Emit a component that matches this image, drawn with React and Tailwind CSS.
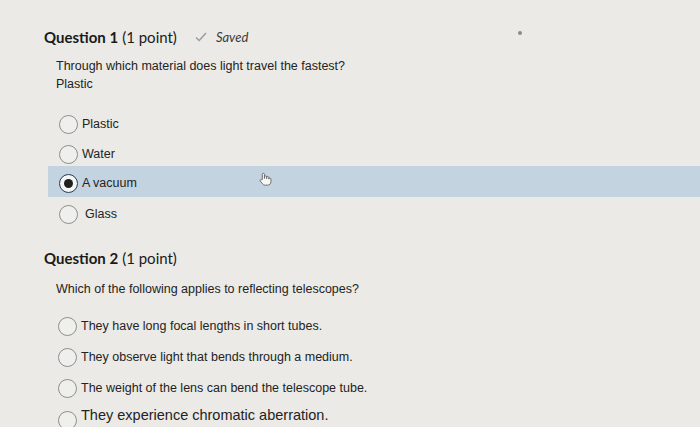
import React from 'react';

const Radio = ({ checked }) => (
    <span className={`flex items-center justify-center w-[19px] h-[19px] rounded-full border shrink-0 ${checked ? 'border-[#26395a] border-[1.5px] bg-[#f4f5f6]' : 'border-[#8d8d8d] bg-[#efefec]'}`}>
        {checked && <span className="w-[9px] h-[9px] rounded-full bg-[#1f1f1f]" />}
    </span>
);

const Option = ({ label, checked, wide, rowClass = 'h-[30px]', textClass = 'text-[12.5px]', extra }) => (
    <div className={`flex items-center pl-[11px] ${rowClass}`}>
        <Radio checked={checked} />
        <span className={`${wide ? 'ml-[7px]' : 'ml-[4px]'} text-[#232323] ${textClass}`}>{label}</span>
        {extra}
    </div>
);

const Heading = ({ n, children }) => (
    <div className="flex items-center text-[15px] text-[#1a1a1a]" style={{ fontFamily: 'Lato, "Open Sans", sans-serif' }}>
        <span className="font-bold">Question {n}</span>
        <span className="ml-[4px]">(1 point)</span>
        {children}
    </div>
);

const Hand = () => (
    <svg width="14" height="14" viewBox="0 0 13 13" className="ml-[121px] mb-[9px]">
        <path
            d="M4 7 V2.2 a1 1 0 0 1 2 0 V6 V4.6 a1 1 0 0 1 2 0 V6.2 V5.2 a1 1 0 0 1 2 0 V6.6 a1 1 0 0 1 2 0 V9 c0 2 -1.4 3.2 -3.2 3.2 H6.6 c-1.2 0 -1.9 -0.6 -2.6 -1.6 L2 8.4 a1 1 0 0 1 1.5 -1.2 Z"
            fill="#f6f6f4"
            stroke="#6a6a6a"
            strokeWidth="0.9"
            strokeLinejoin="round"
        />
    </svg>
);

export default function App() {
    return (
        <div className="w-[700px] h-[427px] overflow-hidden bg-[#ebeae6]" style={{ fontFamily: '"Liberation Sans", Arial, sans-serif' }}>
            <div className="pl-[44px] pt-[26px] flex justify-between pr-[178px]">
                <Heading n={1}>
                    <span className="flex items-center ml-[17px] text-[13px] italic text-[#3a3a3a]">
                        <svg width="14" height="12" viewBox="0 0 14 12" className="mr-[8px]">
                            <path d="M2 6.5 L5.2 9.5 L12 2" fill="none" stroke="#9a9a9a" strokeWidth="1.4" />
                        </svg>
                        Saved
                    </span>
                </Heading>
                <span className="mt-[5px] w-[4px] h-[4px] rounded-full bg-[#8a8a8a]" />
            </div>
            <div className="pl-[56px] mt-[8px] text-[12.5px] leading-[18px] text-[#232323]">
                <div>Through which material does light travel the fastest?</div>
                <div>Plastic</div>
            </div>
            <div className="ml-[48px] mt-[17px] flex flex-col">
                <Option label="Plastic" />
                <Option label="Water" />
                <div className="-mt-[4px] pt-[4px] h-[31px] bg-[#c3d3e0] flex items-center">
                    <div className="flex items-center pl-[11px] h-[27px] pt-[1px]">
                        <Radio checked />
                        <span className="ml-[4px] text-[12.5px] text-[#232323]">A vacuum</span>
                        <Hand />
                    </div>
                </div>
                <div className="mt-[3px]">
                    <Option label="Glass" wide />
                </div>
            </div>
            <div className="pl-[44px] mt-[17px]">
                <Heading n={2} />
            </div>
            <div className="pl-[56px] mt-[11px] text-[12.5px] leading-[18px] text-[#232323]">
                Which of the following applies to reflecting telescopes?
            </div>
            <div className="ml-[47px] mt-[13px] flex flex-col">
                <Option rowClass="h-[31px]" label="They have long focal lengths in short tubes." />
                <Option rowClass="h-[31px]" label="They observe light that bends through a medium." />
                <Option rowClass="h-[31px]" label="The weight of the lens can bend the telescope tube." />
                <div className="flex items-start h-[31px] pl-[11px] pt-[7px]">
                    <Radio />
                    <span className="ml-[4px] -mt-[7px] text-[14.5px] leading-[22px] text-[#232323]">They experience chromatic aberration.</span>
                </div>
            </div>
        </div>
    );
}
